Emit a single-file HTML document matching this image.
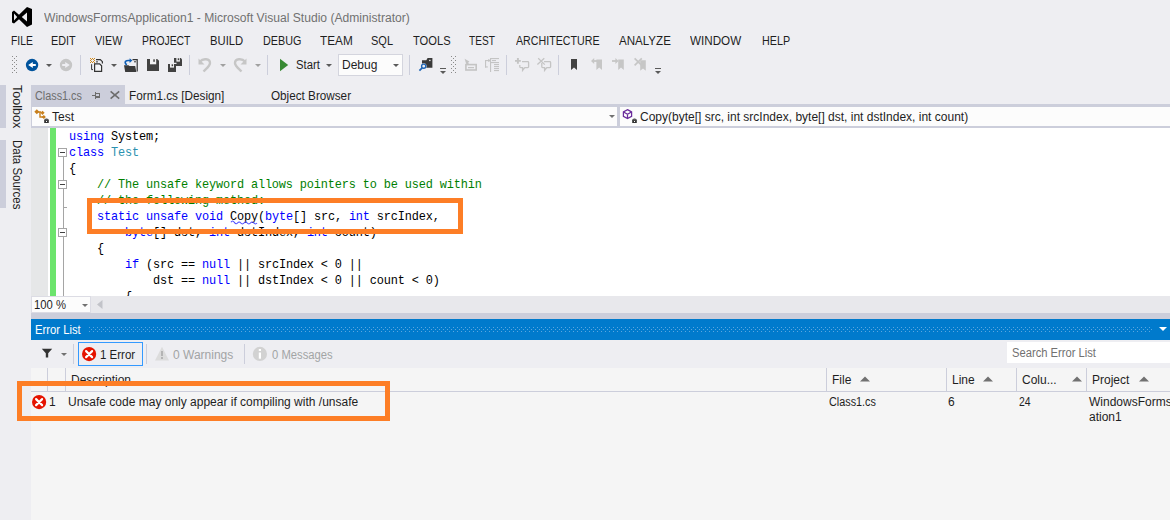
<!DOCTYPE html>
<html><head><meta charset="utf-8">
<style>
*{margin:0;padding:0;box-sizing:border-box}
html,body{width:1170px;height:520px;overflow:hidden;background:#eeeef2;font-family:"Liberation Sans",sans-serif;font-size:12px;color:#1e1e1e}
.a{position:absolute;white-space:nowrap;line-height:14px;transform-origin:0 0}
svg.a{overflow:visible}
.code{position:absolute;left:38px;font-family:"Liberation Mono",monospace;font-size:11.667px;line-height:16px;white-space:pre;color:#000}
.kw{color:#0000ff}.cm{color:#008000}.ty{color:#2b91af}
</style></head><body>
<svg class="a" style="left:0px;top:0px" width="40" height="30" viewBox="0 0 40 30"><path fill="#000" fill-rule="evenodd" d="M12 12 L14 10.5 L19 14.8 L27 7 L32 9 L32 24.5 L27 27 L19 19.3 L14 23.5 L12 22.5 Z M14 13.5 L17.2 17 L14 20.5 Z M21.8 17 L27 12.5 L27 21.5 Z"/></svg>
<div class="a" style="left:44px;top:11px;color:#717171;transform:scaleX(1.009);">WindowsFormsApplication1 - Microsoft Visual Studio (Administrator)</div>
<div class="a" style="left:10.9px;top:34px;color:#1e1e1e;transform:scaleX(0.8624999999999999);">FILE</div>
<div class="a" style="left:51.4px;top:34px;color:#1e1e1e;transform:scaleX(0.8999999999999999);">EDIT</div>
<div class="a" style="left:95.1px;top:34px;color:#1e1e1e;transform:scaleX(0.8870967741935484);">VIEW</div>
<div class="a" style="left:142.4px;top:34px;color:#1e1e1e;transform:scaleX(0.8654545454545455);">PROJECT</div>
<div class="a" style="left:210.4px;top:34px;color:#1e1e1e;transform:scaleX(0.9382352941176471);">BUILD</div>
<div class="a" style="left:262.6px;top:34px;color:#1e1e1e;transform:scaleX(0.8975609756097562);">DEBUG</div>
<div class="a" style="left:319.7px;top:34px;color:#1e1e1e;transform:scaleX(0.98125);">TEAM</div>
<div class="a" style="left:371.0px;top:34px;color:#1e1e1e;transform:scaleX(0.917391304347826);">SQL</div>
<div class="a" style="left:412.8px;top:34px;color:#1e1e1e;transform:scaleX(0.93);">TOOLS</div>
<div class="a" style="left:469.1px;top:34px;color:#1e1e1e;transform:scaleX(0.8419354838709677);">TEST</div>
<div class="a" style="left:515.8px;top:34px;color:#1e1e1e;transform:scaleX(0.8882978723404256);">ARCHITECTURE</div>
<div class="a" style="left:619.2px;top:34px;color:#1e1e1e;transform:scaleX(0.9641509433962264);">ANALYZE</div>
<div class="a" style="left:689.9px;top:34px;color:#1e1e1e;transform:scaleX(0.9716981132075472);">WINDOW</div>
<div class="a" style="left:761.7px;top:34px;color:#1e1e1e;transform:scaleX(0.8966666666666666);">HELP</div>
<svg class="a" style="left:0px;top:0px" width="1" height="1" viewBox="0 0 1 1"><g fill="#8a8a8a"><rect x="12" y="56" width="1" height="1"/><rect x="16" y="56" width="1" height="1"/><rect x="14" y="58" width="1" height="1"/><rect x="12" y="60" width="1" height="1"/><rect x="16" y="60" width="1" height="1"/><rect x="14" y="62" width="1" height="1"/><rect x="12" y="64" width="1" height="1"/><rect x="16" y="64" width="1" height="1"/><rect x="14" y="66" width="1" height="1"/><rect x="12" y="68" width="1" height="1"/><rect x="16" y="68" width="1" height="1"/><rect x="14" y="70" width="1" height="1"/><rect x="12" y="72" width="1" height="1"/><rect x="16" y="72" width="1" height="1"/></g></svg>
<svg class="a" style="left:0px;top:0px" width="1" height="1" viewBox="0 0 1 1"><g fill="#8a8a8a"><rect x="451" y="56" width="1" height="1"/><rect x="455" y="56" width="1" height="1"/><rect x="453" y="58" width="1" height="1"/><rect x="451" y="60" width="1" height="1"/><rect x="455" y="60" width="1" height="1"/><rect x="453" y="62" width="1" height="1"/><rect x="451" y="64" width="1" height="1"/><rect x="455" y="64" width="1" height="1"/><rect x="453" y="66" width="1" height="1"/><rect x="451" y="68" width="1" height="1"/><rect x="455" y="68" width="1" height="1"/><rect x="453" y="70" width="1" height="1"/><rect x="451" y="72" width="1" height="1"/><rect x="455" y="72" width="1" height="1"/></g></svg>
<svg class="a" style="left:25px;top:58px" width="14" height="14" viewBox="0 0 14 14"><circle cx="7.05" cy="7.05" r="6.2" fill="#00539c"/><path d="M3.2 7 L7.8 3.9 V6 H10.8 V8.1 H7.8 V10.1 Z" fill="#fff"/></svg>
<svg class="a" style="left:46px;top:64px" width="6" height="3" viewBox="0 0 6 3"><path d="M0 0H6L3.0 3Z" fill="#5a5a5a"/></svg>
<svg class="a" style="left:59px;top:58px" width="14" height="14" viewBox="0 0 14 14"><circle cx="7" cy="7.05" r="6.2" fill="#c6c6c6"/><path d="M10.8 7 L6.2 3.9 V6 H3.2 V8.1 H6.2 V10.1 Z" fill="#eeeef2"/></svg>
<div class="a" style="left:80px;top:55px;width:1px;height:20px;background:#cccedb;"></div>
<svg class="a" style="left:0px;top:0px" width="1" height="1" viewBox="0 0 1 1"><g fill="#d08a1e"><rect x="90" y="58" width="1" height="1"/><rect x="92" y="58" width="1" height="1"/><rect x="94" y="58" width="1" height="1"/><rect x="91" y="59" width="1" height="1"/><rect x="93" y="59" width="1" height="1"/><rect x="90" y="60" width="1" height="1"/><rect x="94" y="60" width="1" height="1"/><rect x="91" y="61" width="1" height="1"/><rect x="93" y="61" width="1" height="1"/><rect x="90" y="62" width="1" height="1"/><rect x="92" y="62" width="1" height="1"/><rect x="94" y="62" width="1" height="1"/></g>
<path d="M96 59.6 H100.3 L102.4 61.7 V63.5" fill="none" stroke="#333" stroke-width="1.2"/><path d="M96 61.9 H98" stroke="#333" stroke-width="1"/>
<path d="M94.6 63.8 H99.6 L101.6 65.8 V71.4 H94.6 Z" fill="#f4f4f6" stroke="#333" stroke-width="1.2"/>
<path d="M91.6 64.2 V69.6 H93" fill="none" stroke="#333" stroke-width="1"/></svg>
<svg class="a" style="left:111px;top:64px" width="6" height="3" viewBox="0 0 6 3"><path d="M0 0H6L3.0 3Z" fill="#5a5a5a"/></svg>
<svg class="a" style="left:0px;top:0px" width="1" height="1" viewBox="0 0 1 1"><path d="M132.5 59.6 H137.2 V71.4" fill="none" stroke="#333" stroke-width="1.2"/><path d="M134 61.8 H136" stroke="#333" stroke-width="1"/>
<path d="M124 65.2 H128.5 L129.5 66 H135.2 L136.3 71.9 H125.2 Z" fill="#3a3a3a"/>
<path d="M127 64.6 C124.8 64 124.6 61.5 126.5 60.8 C127.5 60.4 129 60.5 130 60.6" fill="none" stroke="#0e5eb5" stroke-width="1.7"/><path d="M129.6 58.2 L132.4 60.6 L129.6 63 Z" fill="#0e5eb5"/></svg>
<svg class="a" style="left:0px;top:0px" width="1" height="1" viewBox="0 0 1 1"><path d="M147 59 H157.2 L159 60.8 V71 H147 Z" fill="#424242"/><rect x="150" y="59" width="6.199999999999989" height="5.299999999999997" fill="#f2f2f4"/><rect x="153.3" y="59.3" width="1.5" height="2.4999999999999973" fill="#424242"/></svg>
<svg class="a" style="left:0px;top:0px" width="1" height="1" viewBox="0 0 1 1"><path d="M174 58 H180.8 L182 59.2 V66 H174 Z" fill="#424242"/><rect x="176.4" y="58" width="3.5" height="3.6000000000000014" fill="#f2f2f4"/><rect x="177.7" y="58.3" width="1.5" height="1.9000000000000028" fill="#424242"/><path d="M173.5 63.2 V72.5 M173 63.3 H176.5" stroke="#eeeef2" stroke-width="1.2"/><path d="M168 64 H174.8 L176 65.2 V72 H168 Z" fill="#424242"/><rect x="170" y="64" width="4" height="3.5999999999999943" fill="#f2f2f4"/><rect x="171.6" y="64.3" width="1.5" height="1.9000000000000028" fill="#424242"/></svg>
<div class="a" style="left:189px;top:55px;width:1px;height:20px;background:#cccedb;"></div>
<svg class="a" style="left:197px;top:57px" width="16" height="16" viewBox="0 0 16 16"><path d="M3 4.5 C6 1 13 1.5 13 6 C13 9 10 11 6.5 14.5" fill="none" stroke="#c6c6c6" stroke-width="2.4"/><path d="M1.5 1.5 V7.5 H7.5 Z" fill="#c6c6c6"/></svg>
<svg class="a" style="left:220px;top:64px" width="6" height="3" viewBox="0 0 6 3"><path d="M0 0H6L3.0 3Z" fill="#a0a0a0"/></svg>
<svg class="a" style="left:232px;top:57px" width="16" height="16" viewBox="0 0 16 16"><path d="M13 4.5 C10 1 3 1.5 3 6 C3 9 6 11 9.5 14.5" fill="none" stroke="#c6c6c6" stroke-width="2.4"/><path d="M14.5 1.5 V7.5 H8.5 Z" fill="#c6c6c6"/></svg>
<svg class="a" style="left:255px;top:64px" width="6" height="3" viewBox="0 0 6 3"><path d="M0 0H6L3.0 3Z" fill="#a0a0a0"/></svg>
<div class="a" style="left:267px;top:55px;width:1px;height:20px;background:#cccedb;"></div>
<svg class="a" style="left:279px;top:58px" width="10" height="14" viewBox="0 0 10 14"><path d="M1 0.8 L9.2 7 L1 13.2 Z" fill="#388a34"/></svg>
<div class="a" style="left:296px;top:58px;color:#1e1e1e;transform:scaleX(0.94);">Start</div>
<svg class="a" style="left:326px;top:64px" width="6" height="3" viewBox="0 0 6 3"><path d="M0 0H6L3.0 3Z" fill="#5a5a5a"/></svg>
<div class="a" style="left:338px;top:54px;width:65px;height:22px;background:#fcfcfc;border:1px solid #d4d5de"></div>
<div class="a" style="left:342px;top:58px;color:#1e1e1e;">Debug</div>
<svg class="a" style="left:393px;top:64px" width="6" height="3" viewBox="0 0 6 3"><path d="M0 0H6L3.0 3Z" fill="#5a5a5a"/></svg>
<div class="a" style="left:409px;top:55px;width:1px;height:20px;background:#cccedb;"></div>
<svg class="a" style="left:0px;top:0px" width="1" height="1" viewBox="0 0 1 1"><path d="M422 60.3 H426.3 L427.6 58 H432.4 V67.8 H422 Z" fill="#3a3a3a"/><rect x="429.2" y="59.8" width="1.3" height="1.3" fill="#fff"/>
<circle cx="423.7" cy="66.2" r="2.9" fill="#eeeef2"/><circle cx="423.7" cy="66.2" r="2.1" fill="#eeeef2" stroke="#1e64b4" stroke-width="1.4"/><path d="M422.2 67.8 L419.4 70.6" stroke="#1e64b4" stroke-width="1.7"/></svg>
<div class="a" style="left:440px;top:68px;width:6px;height:1px;background:#5a5a5a;"></div>
<svg class="a" style="left:440px;top:71px" width="6" height="3" viewBox="0 0 6 3"><path d="M0 0H6L3.0 3Z" fill="#5a5a5a"/></svg>
<svg class="a" style="left:0px;top:0px" width="1" height="1" viewBox="0 0 1 1"><path d="M464.6 58.8 L469.4 61.6 L466.4 64.4 Z" fill="#c4c4c4"/><path d="M467 62 L468.4 64.6" stroke="#c4c4c4" stroke-width="1.4"/><rect x="465.9" y="64.6" width="10.3" height="5.4" fill="none" stroke="#c4c4c4" stroke-width="1.6"/><rect x="468" y="67" width="6" height="1.2" fill="#c4c4c4"/></svg>
<svg class="a" style="left:0px;top:0px" width="1" height="1" viewBox="0 0 1 1"><g fill="#c4c4c4"><rect x="490" y="58" width="9" height="1.1"/><rect x="490" y="58" width="1.1" height="14"/><rect x="492" y="60" width="4" height="1.1"/><rect x="490" y="62" width="9" height="1.1"/><rect x="494" y="64" width="5" height="1.1"/><rect x="494" y="66" width="5" height="1.1"/><rect x="494" y="68" width="5" height="1.1"/><rect x="494" y="70" width="5" height="1.1"/><rect x="485" y="60" width="5" height="1.1"/><rect x="485" y="60" width="1.1" height="7.5"/><rect x="485" y="66.4" width="2.8" height="1.1"/><rect x="488.3" y="59" width="1.1" height="3"/></g></svg>
<div class="a" style="left:506px;top:55px;width:1px;height:20px;background:#cccedb;"></div>
<svg class="a" style="left:0px;top:0px" width="1" height="1" viewBox="0 0 1 1"><path d="M517.9 58 V63.8 M515 60.9 H520.8" stroke="#c4c4c4" stroke-width="1.9"/><path d="M522 61.6 H527.8 Q528.6 61.6 528.6 62.4 V66.8 Q528.6 67.6 527.8 67.6 H524.8 L522.6 70.4 V67.6 H520.6 Q519.8 67.6 519.8 66.8 V65" fill="none" stroke="#c4c4c4" stroke-width="1.3"/></svg>
<svg class="a" style="left:0px;top:0px" width="1" height="1" viewBox="0 0 1 1"><path d="M537.4 64.4 L544.3 58.2 M538.2 58.3 L544.8 64.6" stroke="#c4c4c4" stroke-width="1.3"/><path d="M544 61.6 H549.8 Q550.6 61.6 550.6 62.4 V66.8 Q550.6 67.6 549.8 67.6 H546.8 L544.6 70.4 V67.6 H542.6 Q541.8 67.6 541.8 66.8 V63" fill="none" stroke="#c4c4c4" stroke-width="1.3"/></svg>
<div class="a" style="left:558px;top:55px;width:1px;height:20px;background:#cccedb;"></div>
<svg class="a" style="left:0px;top:0px" width="1" height="1" viewBox="0 0 1 1"><path d="M571 59 H577 V70 L574 67.6 L571 70 Z" fill="#424242"/></svg>
<svg class="a" style="left:0px;top:0px" width="1" height="1" viewBox="0 0 1 1"><path d="M591 61 L594.2 58 V64 Z" fill="#c6c6c6"/><rect x="593.5" y="60.1" width="4.5" height="1.8" fill="#c6c6c6"/><path d="M596.4 59.4h5.6v10.6l-2.8-2.4l-2.8 2.4z" fill="#c6c6c6"/></svg>
<svg class="a" style="left:0px;top:0px" width="1" height="1" viewBox="0 0 1 1"><path d="M618.6 61 L615.4 58 V64 Z" fill="#c6c6c6"/><rect x="612" y="60.1" width="4.5" height="1.8" fill="#c6c6c6"/><path d="M618.2 59.4h5.6v10.6l-2.8-2.4l-2.8 2.4z" fill="#c6c6c6"/></svg>
<svg class="a" style="left:0px;top:0px" width="1" height="1" viewBox="0 0 1 1"><path d="M634.6 58.4 L641.8 65.4 M641.8 58.4 L634.6 65.4" stroke="#c6c6c6" stroke-width="1.7"/><path d="M640.2 60.2h5.6v10.6l-2.8-2.4l-2.8 2.4z" fill="#c6c6c6"/></svg>
<div class="a" style="left:655px;top:68px;width:6px;height:1px;background:#5a5a5a;"></div>
<svg class="a" style="left:655px;top:71px" width="6" height="3" viewBox="0 0 6 3"><path d="M0 0H6L3.0 3Z" fill="#5a5a5a"/></svg>
<div class="a" style="left:0px;top:85px;width:6px;height:43px;background:#cccedb;"></div>
<div class="a" style="left:0px;top:140px;width:6px;height:68px;background:#cccedb;"></div>
<div class="a" style="left:24px;top:85px;transform:rotate(90deg) scaleX(1.045);color:#1e1e1e">Toolbox</div>
<div class="a" style="left:24px;top:139.5px;transform:rotate(90deg) scaleX(0.955);color:#1e1e1e">Data Sources</div>
<div class="a" style="left:31px;top:85px;width:94px;height:22px;background:#cccedb;"></div>
<div class="a" style="left:31px;top:104px;width:1139px;height:3px;background:#cccedb;"></div>
<div class="a" style="left:35px;top:89px;color:#6d6d6d;transform:scaleX(0.9019607843137255);">Class1.cs</div>
<svg class="a" style="left:0px;top:0px" width="1" height="1" viewBox="0 0 1 1"><g fill="#6d6d6d"><rect x="92" y="95" width="3" height="1"/><rect x="95" y="92" width="1" height="7"/><rect x="96" y="93" width="4" height="1"/><rect x="96" y="96" width="4" height="2"/><rect x="99" y="93" width="1" height="4"/></g></svg>
<svg class="a" style="left:0px;top:0px" width="1" height="1" viewBox="0 0 1 1"><path d="M110.6 91.3 L119.2 98.7 M119.2 91.3 L110.6 98.7" stroke="#6d6d6d" stroke-width="1.6"/></svg>
<div class="a" style="left:128.5px;top:89px;color:#1e1e1e;transform:scaleX(0.9791666666666666);">Form1.cs [Design]</div>
<div class="a" style="left:271px;top:89px;color:#1e1e1e;transform:scaleX(0.975609756097561);">Object Browser</div>
<div class="a" style="left:31px;top:107px;width:1139px;height:19px;background:#fcfcfc;"></div>
<div class="a" style="left:31px;top:126px;width:1139px;height:2px;background:#cccedb;"></div>
<div class="a" style="left:617px;top:107px;width:3px;height:19px;background:#cccedb;"></div>
<div class="a" style="left:31px;top:107px;width:1px;height:19px;background:#cccedb;"></div>
<svg class="a" style="left:0px;top:0px" width="1" height="1" viewBox="0 0 1 1"><g fill="#c8801e"><path d="M34.3 111.7 L36.8 109.2 L39.3 111.7 L36.8 114.2Z"/><path d="M40.4 112.8 L42.5 110.7 L44.6 112.8 L42.5 114.9Z"/><path d="M41.7 117 L43.8 114.9 L45.9 117 L43.8 119.1Z"/></g>
<path d="M37 112 H41 M40 112.5 V117 H43" fill="none" stroke="#c8801e" stroke-width="1.4"/><path d="M44.2 123 V120.2 Q44.2 118.4 46.5 118.4 Q48.8 118.4 48.8 120.2 V123 Z" fill="#333"/><rect x="45.2" y="119.4" width="2.6" height="0.9" fill="#777"/><rect x="46" y="121" width="1" height="1" fill="#fff"/></svg>
<div class="a" style="left:52px;top:110px;color:#1e1e1e;">Test</div>
<svg class="a" style="left:609px;top:115px" width="6" height="3" viewBox="0 0 6 3"><path d="M0 0H6L3.0 3Z" fill="#717171"/></svg>
<svg class="a" style="left:0px;top:0px" width="1" height="1" viewBox="0 0 1 1"><path d="M627.5 109.6 L631.6 111.9 V116.3 L627.5 118.5 L623.4 116.3 V111.9 Z M623.6 112 L627.5 114.2 L631.4 112 M627.5 114.2 V118.4" fill="none" stroke="#6a2c9c" stroke-width="1.25"/><path d="M632.2 123 V120.2 Q632.2 118.4 634.5 118.4 Q636.8 118.4 636.8 120.2 V123 Z" fill="#333"/><rect x="633.2" y="119.4" width="2.6" height="0.9" fill="#777"/><rect x="634" y="121" width="1" height="1" fill="#fff"/></svg>
<div class="a" style="left:640px;top:110px;color:#1e1e1e;">Copy(byte[] src, int srcIndex, byte[] dst, int dstIndex, int count)</div>
<div class="a" style="left:31px;top:128px;width:1139px;height:168px;background:#ffffff;"></div>
<div class="a" style="left:31px;top:128px;width:17px;height:168px;background:#e6e7e8;"></div>
<div class="a" style="left:50px;top:128px;width:6px;height:168px;background:#6ce46c;"></div>
<div class="a" style="left:63px;top:157px;width:1px;height:139px;background:#a5a5a5;"></div>
<div class="a" style="left:58px;top:148px;width:9px;height:9px;border:1px solid #a5a5a5;background:#fff"></div>
<div class="a" style="left:60px;top:152px;width:5px;height:1px;background:#424242;"></div>
<div class="a" style="left:58px;top:180px;width:9px;height:9px;border:1px solid #a5a5a5;background:#fff"></div>
<div class="a" style="left:60px;top:184px;width:5px;height:1px;background:#424242;"></div>
<div class="a" style="left:58px;top:228px;width:9px;height:9px;border:1px solid #a5a5a5;background:#fff"></div>
<div class="a" style="left:60px;top:232px;width:5px;height:1px;background:#424242;"></div>
<div class="a" style="left:63px;top:207px;width:4px;height:1px;background:#a5a5a5;"></div>
<div class="a" style="left:69px;top:128px;width:1100px;height:168px;overflow:hidden">
<div style="position:absolute;left:0px;top:1px;font-family:'Liberation Mono',monospace;font-size:11.9px;letter-spacing:-0.14px;line-height:16px;white-space:pre;color:#000"><span class="kw">using</span> System;
<span class="kw">class</span> <span class="ty">Test</span>
{
    <span class="cm">// The unsafe keyword allows pointers to be used within</span>
    <span class="cm">// the following method:</span>
    <span class="kw">static</span> <span class="kw">unsafe</span> <span class="kw">void</span> Copy(<span class="kw">byte</span>[] src, <span class="kw">int</span> srcIndex,
        <span class="kw">byte</span>[] dst, <span class="kw">int</span> dstIndex, <span class="kw">int</span> count)
    {
        <span class="kw">if</span> (src == <span class="kw">null</span> || srcIndex &lt; 0 ||
            dst == <span class="kw">null</span> || dstIndex &lt; 0 || count &lt; 0)
        {</div>
</div>
<svg class="a" style="left:0px;top:0px" width="1" height="1" viewBox="0 0 1 1"><path d="M231 222.3 Q232.6 219.7 234.25 222.3 T237.50 223 T240.75 223 T244.00 223 T247.25 223 T250.50 223 T253.75 223 T257.00 223" fill="none" stroke="#4b4bff" stroke-width="1.1"/></svg>
<div class="a" style="left:31px;top:296px;width:1139px;height:17px;background:#e8e8ec;"></div>
<div class="a" style="left:31px;top:296px;width:60px;height:17px;background:#fcfcfc;border:1px solid #dcdce4"></div>
<div class="a" style="left:34px;top:298px;color:#1e1e1e;transform:scaleX(0.9393939393939394);">100 %</div>
<svg class="a" style="left:82px;top:304px" width="6" height="3" viewBox="0 0 6 3"><path d="M0 0H6L3.0 3Z" fill="#717171"/></svg>
<svg class="a" style="left:96px;top:299px" width="8" height="11" viewBox="0 0 8 11"><path d="M6.5 1 V10 L1 5.5 Z" fill="#c2c3c9"/></svg>
<div class="a" style="left:31px;top:313px;width:1139px;height:6px;background:#cccedb;"></div>
<div class="a" style="left:31px;top:319px;width:1139px;height:21px;background:#007acc;"></div>
<div class="a" style="left:35px;top:323px;color:#ffffff;transform:scaleX(0.9375);">Error List</div>
<svg class="a" style="left:0px;top:0px" width="1" height="1" viewBox="0 0 1 1"><g fill="#5ba6e0"><rect x="89" y="327" width="1" height="1"/><rect x="89" y="331" width="1" height="1"/><rect x="91" y="329" width="1" height="1"/><rect x="93" y="327" width="1" height="1"/><rect x="93" y="331" width="1" height="1"/><rect x="95" y="329" width="1" height="1"/><rect x="97" y="327" width="1" height="1"/><rect x="97" y="331" width="1" height="1"/><rect x="99" y="329" width="1" height="1"/><rect x="101" y="327" width="1" height="1"/><rect x="101" y="331" width="1" height="1"/><rect x="103" y="329" width="1" height="1"/><rect x="105" y="327" width="1" height="1"/><rect x="105" y="331" width="1" height="1"/><rect x="107" y="329" width="1" height="1"/><rect x="109" y="327" width="1" height="1"/><rect x="109" y="331" width="1" height="1"/><rect x="111" y="329" width="1" height="1"/><rect x="113" y="327" width="1" height="1"/><rect x="113" y="331" width="1" height="1"/><rect x="115" y="329" width="1" height="1"/><rect x="117" y="327" width="1" height="1"/><rect x="117" y="331" width="1" height="1"/><rect x="119" y="329" width="1" height="1"/><rect x="121" y="327" width="1" height="1"/><rect x="121" y="331" width="1" height="1"/><rect x="123" y="329" width="1" height="1"/><rect x="125" y="327" width="1" height="1"/><rect x="125" y="331" width="1" height="1"/><rect x="127" y="329" width="1" height="1"/><rect x="129" y="327" width="1" height="1"/><rect x="129" y="331" width="1" height="1"/><rect x="131" y="329" width="1" height="1"/><rect x="133" y="327" width="1" height="1"/><rect x="133" y="331" width="1" height="1"/><rect x="135" y="329" width="1" height="1"/><rect x="137" y="327" width="1" height="1"/><rect x="137" y="331" width="1" height="1"/><rect x="139" y="329" width="1" height="1"/><rect x="141" y="327" width="1" height="1"/><rect x="141" y="331" width="1" height="1"/><rect x="143" y="329" width="1" height="1"/><rect x="145" y="327" width="1" height="1"/><rect x="145" y="331" width="1" height="1"/><rect x="147" y="329" width="1" height="1"/><rect x="149" y="327" width="1" height="1"/><rect x="149" y="331" width="1" height="1"/><rect x="151" y="329" width="1" height="1"/><rect x="153" y="327" width="1" height="1"/><rect x="153" y="331" width="1" height="1"/><rect x="155" y="329" width="1" height="1"/><rect x="157" y="327" width="1" height="1"/><rect x="157" y="331" width="1" height="1"/><rect x="159" y="329" width="1" height="1"/><rect x="161" y="327" width="1" height="1"/><rect x="161" y="331" width="1" height="1"/><rect x="163" y="329" width="1" height="1"/><rect x="165" y="327" width="1" height="1"/><rect x="165" y="331" width="1" height="1"/><rect x="167" y="329" width="1" height="1"/><rect x="169" y="327" width="1" height="1"/><rect x="169" y="331" width="1" height="1"/><rect x="171" y="329" width="1" height="1"/><rect x="173" y="327" width="1" height="1"/><rect x="173" y="331" width="1" height="1"/><rect x="175" y="329" width="1" height="1"/><rect x="177" y="327" width="1" height="1"/><rect x="177" y="331" width="1" height="1"/><rect x="179" y="329" width="1" height="1"/><rect x="181" y="327" width="1" height="1"/><rect x="181" y="331" width="1" height="1"/><rect x="183" y="329" width="1" height="1"/><rect x="185" y="327" width="1" height="1"/><rect x="185" y="331" width="1" height="1"/><rect x="187" y="329" width="1" height="1"/><rect x="189" y="327" width="1" height="1"/><rect x="189" y="331" width="1" height="1"/><rect x="191" y="329" width="1" height="1"/><rect x="193" y="327" width="1" height="1"/><rect x="193" y="331" width="1" height="1"/><rect x="195" y="329" width="1" height="1"/><rect x="197" y="327" width="1" height="1"/><rect x="197" y="331" width="1" height="1"/><rect x="199" y="329" width="1" height="1"/><rect x="201" y="327" width="1" height="1"/><rect x="201" y="331" width="1" height="1"/><rect x="203" y="329" width="1" height="1"/><rect x="205" y="327" width="1" height="1"/><rect x="205" y="331" width="1" height="1"/><rect x="207" y="329" width="1" height="1"/><rect x="209" y="327" width="1" height="1"/><rect x="209" y="331" width="1" height="1"/><rect x="211" y="329" width="1" height="1"/><rect x="213" y="327" width="1" height="1"/><rect x="213" y="331" width="1" height="1"/><rect x="215" y="329" width="1" height="1"/><rect x="217" y="327" width="1" height="1"/><rect x="217" y="331" width="1" height="1"/><rect x="219" y="329" width="1" height="1"/><rect x="221" y="327" width="1" height="1"/><rect x="221" y="331" width="1" height="1"/><rect x="223" y="329" width="1" height="1"/><rect x="225" y="327" width="1" height="1"/><rect x="225" y="331" width="1" height="1"/><rect x="227" y="329" width="1" height="1"/><rect x="229" y="327" width="1" height="1"/><rect x="229" y="331" width="1" height="1"/><rect x="231" y="329" width="1" height="1"/><rect x="233" y="327" width="1" height="1"/><rect x="233" y="331" width="1" height="1"/><rect x="235" y="329" width="1" height="1"/><rect x="237" y="327" width="1" height="1"/><rect x="237" y="331" width="1" height="1"/><rect x="239" y="329" width="1" height="1"/><rect x="241" y="327" width="1" height="1"/><rect x="241" y="331" width="1" height="1"/><rect x="243" y="329" width="1" height="1"/><rect x="245" y="327" width="1" height="1"/><rect x="245" y="331" width="1" height="1"/><rect x="247" y="329" width="1" height="1"/><rect x="249" y="327" width="1" height="1"/><rect x="249" y="331" width="1" height="1"/><rect x="251" y="329" width="1" height="1"/><rect x="253" y="327" width="1" height="1"/><rect x="253" y="331" width="1" height="1"/><rect x="255" y="329" width="1" height="1"/><rect x="257" y="327" width="1" height="1"/><rect x="257" y="331" width="1" height="1"/><rect x="259" y="329" width="1" height="1"/><rect x="261" y="327" width="1" height="1"/><rect x="261" y="331" width="1" height="1"/><rect x="263" y="329" width="1" height="1"/><rect x="265" y="327" width="1" height="1"/><rect x="265" y="331" width="1" height="1"/><rect x="267" y="329" width="1" height="1"/><rect x="269" y="327" width="1" height="1"/><rect x="269" y="331" width="1" height="1"/><rect x="271" y="329" width="1" height="1"/><rect x="273" y="327" width="1" height="1"/><rect x="273" y="331" width="1" height="1"/><rect x="275" y="329" width="1" height="1"/><rect x="277" y="327" width="1" height="1"/><rect x="277" y="331" width="1" height="1"/><rect x="279" y="329" width="1" height="1"/><rect x="281" y="327" width="1" height="1"/><rect x="281" y="331" width="1" height="1"/><rect x="283" y="329" width="1" height="1"/><rect x="285" y="327" width="1" height="1"/><rect x="285" y="331" width="1" height="1"/><rect x="287" y="329" width="1" height="1"/><rect x="289" y="327" width="1" height="1"/><rect x="289" y="331" width="1" height="1"/><rect x="291" y="329" width="1" height="1"/><rect x="293" y="327" width="1" height="1"/><rect x="293" y="331" width="1" height="1"/><rect x="295" y="329" width="1" height="1"/><rect x="297" y="327" width="1" height="1"/><rect x="297" y="331" width="1" height="1"/><rect x="299" y="329" width="1" height="1"/><rect x="301" y="327" width="1" height="1"/><rect x="301" y="331" width="1" height="1"/><rect x="303" y="329" width="1" height="1"/><rect x="305" y="327" width="1" height="1"/><rect x="305" y="331" width="1" height="1"/><rect x="307" y="329" width="1" height="1"/><rect x="309" y="327" width="1" height="1"/><rect x="309" y="331" width="1" height="1"/><rect x="311" y="329" width="1" height="1"/><rect x="313" y="327" width="1" height="1"/><rect x="313" y="331" width="1" height="1"/><rect x="315" y="329" width="1" height="1"/><rect x="317" y="327" width="1" height="1"/><rect x="317" y="331" width="1" height="1"/><rect x="319" y="329" width="1" height="1"/><rect x="321" y="327" width="1" height="1"/><rect x="321" y="331" width="1" height="1"/><rect x="323" y="329" width="1" height="1"/><rect x="325" y="327" width="1" height="1"/><rect x="325" y="331" width="1" height="1"/><rect x="327" y="329" width="1" height="1"/><rect x="329" y="327" width="1" height="1"/><rect x="329" y="331" width="1" height="1"/><rect x="331" y="329" width="1" height="1"/><rect x="333" y="327" width="1" height="1"/><rect x="333" y="331" width="1" height="1"/><rect x="335" y="329" width="1" height="1"/><rect x="337" y="327" width="1" height="1"/><rect x="337" y="331" width="1" height="1"/><rect x="339" y="329" width="1" height="1"/><rect x="341" y="327" width="1" height="1"/><rect x="341" y="331" width="1" height="1"/><rect x="343" y="329" width="1" height="1"/><rect x="345" y="327" width="1" height="1"/><rect x="345" y="331" width="1" height="1"/><rect x="347" y="329" width="1" height="1"/><rect x="349" y="327" width="1" height="1"/><rect x="349" y="331" width="1" height="1"/><rect x="351" y="329" width="1" height="1"/><rect x="353" y="327" width="1" height="1"/><rect x="353" y="331" width="1" height="1"/><rect x="355" y="329" width="1" height="1"/><rect x="357" y="327" width="1" height="1"/><rect x="357" y="331" width="1" height="1"/><rect x="359" y="329" width="1" height="1"/><rect x="361" y="327" width="1" height="1"/><rect x="361" y="331" width="1" height="1"/><rect x="363" y="329" width="1" height="1"/><rect x="365" y="327" width="1" height="1"/><rect x="365" y="331" width="1" height="1"/><rect x="367" y="329" width="1" height="1"/><rect x="369" y="327" width="1" height="1"/><rect x="369" y="331" width="1" height="1"/><rect x="371" y="329" width="1" height="1"/><rect x="373" y="327" width="1" height="1"/><rect x="373" y="331" width="1" height="1"/><rect x="375" y="329" width="1" height="1"/><rect x="377" y="327" width="1" height="1"/><rect x="377" y="331" width="1" height="1"/><rect x="379" y="329" width="1" height="1"/><rect x="381" y="327" width="1" height="1"/><rect x="381" y="331" width="1" height="1"/><rect x="383" y="329" width="1" height="1"/><rect x="385" y="327" width="1" height="1"/><rect x="385" y="331" width="1" height="1"/><rect x="387" y="329" width="1" height="1"/><rect x="389" y="327" width="1" height="1"/><rect x="389" y="331" width="1" height="1"/><rect x="391" y="329" width="1" height="1"/><rect x="393" y="327" width="1" height="1"/><rect x="393" y="331" width="1" height="1"/><rect x="395" y="329" width="1" height="1"/><rect x="397" y="327" width="1" height="1"/><rect x="397" y="331" width="1" height="1"/><rect x="399" y="329" width="1" height="1"/><rect x="401" y="327" width="1" height="1"/><rect x="401" y="331" width="1" height="1"/><rect x="403" y="329" width="1" height="1"/><rect x="405" y="327" width="1" height="1"/><rect x="405" y="331" width="1" height="1"/><rect x="407" y="329" width="1" height="1"/><rect x="409" y="327" width="1" height="1"/><rect x="409" y="331" width="1" height="1"/><rect x="411" y="329" width="1" height="1"/><rect x="413" y="327" width="1" height="1"/><rect x="413" y="331" width="1" height="1"/><rect x="415" y="329" width="1" height="1"/><rect x="417" y="327" width="1" height="1"/><rect x="417" y="331" width="1" height="1"/><rect x="419" y="329" width="1" height="1"/><rect x="421" y="327" width="1" height="1"/><rect x="421" y="331" width="1" height="1"/><rect x="423" y="329" width="1" height="1"/><rect x="425" y="327" width="1" height="1"/><rect x="425" y="331" width="1" height="1"/><rect x="427" y="329" width="1" height="1"/><rect x="429" y="327" width="1" height="1"/><rect x="429" y="331" width="1" height="1"/><rect x="431" y="329" width="1" height="1"/><rect x="433" y="327" width="1" height="1"/><rect x="433" y="331" width="1" height="1"/><rect x="435" y="329" width="1" height="1"/><rect x="437" y="327" width="1" height="1"/><rect x="437" y="331" width="1" height="1"/><rect x="439" y="329" width="1" height="1"/><rect x="441" y="327" width="1" height="1"/><rect x="441" y="331" width="1" height="1"/><rect x="443" y="329" width="1" height="1"/><rect x="445" y="327" width="1" height="1"/><rect x="445" y="331" width="1" height="1"/><rect x="447" y="329" width="1" height="1"/><rect x="449" y="327" width="1" height="1"/><rect x="449" y="331" width="1" height="1"/><rect x="451" y="329" width="1" height="1"/><rect x="453" y="327" width="1" height="1"/><rect x="453" y="331" width="1" height="1"/><rect x="455" y="329" width="1" height="1"/><rect x="457" y="327" width="1" height="1"/><rect x="457" y="331" width="1" height="1"/><rect x="459" y="329" width="1" height="1"/><rect x="461" y="327" width="1" height="1"/><rect x="461" y="331" width="1" height="1"/><rect x="463" y="329" width="1" height="1"/><rect x="465" y="327" width="1" height="1"/><rect x="465" y="331" width="1" height="1"/><rect x="467" y="329" width="1" height="1"/><rect x="469" y="327" width="1" height="1"/><rect x="469" y="331" width="1" height="1"/><rect x="471" y="329" width="1" height="1"/><rect x="473" y="327" width="1" height="1"/><rect x="473" y="331" width="1" height="1"/><rect x="475" y="329" width="1" height="1"/><rect x="477" y="327" width="1" height="1"/><rect x="477" y="331" width="1" height="1"/><rect x="479" y="329" width="1" height="1"/><rect x="481" y="327" width="1" height="1"/><rect x="481" y="331" width="1" height="1"/><rect x="483" y="329" width="1" height="1"/><rect x="485" y="327" width="1" height="1"/><rect x="485" y="331" width="1" height="1"/><rect x="487" y="329" width="1" height="1"/><rect x="489" y="327" width="1" height="1"/><rect x="489" y="331" width="1" height="1"/><rect x="491" y="329" width="1" height="1"/><rect x="493" y="327" width="1" height="1"/><rect x="493" y="331" width="1" height="1"/><rect x="495" y="329" width="1" height="1"/><rect x="497" y="327" width="1" height="1"/><rect x="497" y="331" width="1" height="1"/><rect x="499" y="329" width="1" height="1"/><rect x="501" y="327" width="1" height="1"/><rect x="501" y="331" width="1" height="1"/><rect x="503" y="329" width="1" height="1"/><rect x="505" y="327" width="1" height="1"/><rect x="505" y="331" width="1" height="1"/><rect x="507" y="329" width="1" height="1"/><rect x="509" y="327" width="1" height="1"/><rect x="509" y="331" width="1" height="1"/><rect x="511" y="329" width="1" height="1"/><rect x="513" y="327" width="1" height="1"/><rect x="513" y="331" width="1" height="1"/><rect x="515" y="329" width="1" height="1"/><rect x="517" y="327" width="1" height="1"/><rect x="517" y="331" width="1" height="1"/><rect x="519" y="329" width="1" height="1"/><rect x="521" y="327" width="1" height="1"/><rect x="521" y="331" width="1" height="1"/><rect x="523" y="329" width="1" height="1"/><rect x="525" y="327" width="1" height="1"/><rect x="525" y="331" width="1" height="1"/><rect x="527" y="329" width="1" height="1"/><rect x="529" y="327" width="1" height="1"/><rect x="529" y="331" width="1" height="1"/><rect x="531" y="329" width="1" height="1"/><rect x="533" y="327" width="1" height="1"/><rect x="533" y="331" width="1" height="1"/><rect x="535" y="329" width="1" height="1"/><rect x="537" y="327" width="1" height="1"/><rect x="537" y="331" width="1" height="1"/><rect x="539" y="329" width="1" height="1"/><rect x="541" y="327" width="1" height="1"/><rect x="541" y="331" width="1" height="1"/><rect x="543" y="329" width="1" height="1"/><rect x="545" y="327" width="1" height="1"/><rect x="545" y="331" width="1" height="1"/><rect x="547" y="329" width="1" height="1"/><rect x="549" y="327" width="1" height="1"/><rect x="549" y="331" width="1" height="1"/><rect x="551" y="329" width="1" height="1"/><rect x="553" y="327" width="1" height="1"/><rect x="553" y="331" width="1" height="1"/><rect x="555" y="329" width="1" height="1"/><rect x="557" y="327" width="1" height="1"/><rect x="557" y="331" width="1" height="1"/><rect x="559" y="329" width="1" height="1"/><rect x="561" y="327" width="1" height="1"/><rect x="561" y="331" width="1" height="1"/><rect x="563" y="329" width="1" height="1"/><rect x="565" y="327" width="1" height="1"/><rect x="565" y="331" width="1" height="1"/><rect x="567" y="329" width="1" height="1"/><rect x="569" y="327" width="1" height="1"/><rect x="569" y="331" width="1" height="1"/><rect x="571" y="329" width="1" height="1"/><rect x="573" y="327" width="1" height="1"/><rect x="573" y="331" width="1" height="1"/><rect x="575" y="329" width="1" height="1"/><rect x="577" y="327" width="1" height="1"/><rect x="577" y="331" width="1" height="1"/><rect x="579" y="329" width="1" height="1"/><rect x="581" y="327" width="1" height="1"/><rect x="581" y="331" width="1" height="1"/><rect x="583" y="329" width="1" height="1"/><rect x="585" y="327" width="1" height="1"/><rect x="585" y="331" width="1" height="1"/><rect x="587" y="329" width="1" height="1"/><rect x="589" y="327" width="1" height="1"/><rect x="589" y="331" width="1" height="1"/><rect x="591" y="329" width="1" height="1"/><rect x="593" y="327" width="1" height="1"/><rect x="593" y="331" width="1" height="1"/><rect x="595" y="329" width="1" height="1"/><rect x="597" y="327" width="1" height="1"/><rect x="597" y="331" width="1" height="1"/><rect x="599" y="329" width="1" height="1"/><rect x="601" y="327" width="1" height="1"/><rect x="601" y="331" width="1" height="1"/><rect x="603" y="329" width="1" height="1"/><rect x="605" y="327" width="1" height="1"/><rect x="605" y="331" width="1" height="1"/><rect x="607" y="329" width="1" height="1"/><rect x="609" y="327" width="1" height="1"/><rect x="609" y="331" width="1" height="1"/><rect x="611" y="329" width="1" height="1"/><rect x="613" y="327" width="1" height="1"/><rect x="613" y="331" width="1" height="1"/><rect x="615" y="329" width="1" height="1"/><rect x="617" y="327" width="1" height="1"/><rect x="617" y="331" width="1" height="1"/><rect x="619" y="329" width="1" height="1"/><rect x="621" y="327" width="1" height="1"/><rect x="621" y="331" width="1" height="1"/><rect x="623" y="329" width="1" height="1"/><rect x="625" y="327" width="1" height="1"/><rect x="625" y="331" width="1" height="1"/><rect x="627" y="329" width="1" height="1"/><rect x="629" y="327" width="1" height="1"/><rect x="629" y="331" width="1" height="1"/><rect x="631" y="329" width="1" height="1"/><rect x="633" y="327" width="1" height="1"/><rect x="633" y="331" width="1" height="1"/><rect x="635" y="329" width="1" height="1"/><rect x="637" y="327" width="1" height="1"/><rect x="637" y="331" width="1" height="1"/><rect x="639" y="329" width="1" height="1"/><rect x="641" y="327" width="1" height="1"/><rect x="641" y="331" width="1" height="1"/><rect x="643" y="329" width="1" height="1"/><rect x="645" y="327" width="1" height="1"/><rect x="645" y="331" width="1" height="1"/><rect x="647" y="329" width="1" height="1"/><rect x="649" y="327" width="1" height="1"/><rect x="649" y="331" width="1" height="1"/><rect x="651" y="329" width="1" height="1"/><rect x="653" y="327" width="1" height="1"/><rect x="653" y="331" width="1" height="1"/><rect x="655" y="329" width="1" height="1"/><rect x="657" y="327" width="1" height="1"/><rect x="657" y="331" width="1" height="1"/><rect x="659" y="329" width="1" height="1"/><rect x="661" y="327" width="1" height="1"/><rect x="661" y="331" width="1" height="1"/><rect x="663" y="329" width="1" height="1"/><rect x="665" y="327" width="1" height="1"/><rect x="665" y="331" width="1" height="1"/><rect x="667" y="329" width="1" height="1"/><rect x="669" y="327" width="1" height="1"/><rect x="669" y="331" width="1" height="1"/><rect x="671" y="329" width="1" height="1"/><rect x="673" y="327" width="1" height="1"/><rect x="673" y="331" width="1" height="1"/><rect x="675" y="329" width="1" height="1"/><rect x="677" y="327" width="1" height="1"/><rect x="677" y="331" width="1" height="1"/><rect x="679" y="329" width="1" height="1"/><rect x="681" y="327" width="1" height="1"/><rect x="681" y="331" width="1" height="1"/><rect x="683" y="329" width="1" height="1"/><rect x="685" y="327" width="1" height="1"/><rect x="685" y="331" width="1" height="1"/><rect x="687" y="329" width="1" height="1"/><rect x="689" y="327" width="1" height="1"/><rect x="689" y="331" width="1" height="1"/><rect x="691" y="329" width="1" height="1"/><rect x="693" y="327" width="1" height="1"/><rect x="693" y="331" width="1" height="1"/><rect x="695" y="329" width="1" height="1"/><rect x="697" y="327" width="1" height="1"/><rect x="697" y="331" width="1" height="1"/><rect x="699" y="329" width="1" height="1"/><rect x="701" y="327" width="1" height="1"/><rect x="701" y="331" width="1" height="1"/><rect x="703" y="329" width="1" height="1"/><rect x="705" y="327" width="1" height="1"/><rect x="705" y="331" width="1" height="1"/><rect x="707" y="329" width="1" height="1"/><rect x="709" y="327" width="1" height="1"/><rect x="709" y="331" width="1" height="1"/><rect x="711" y="329" width="1" height="1"/><rect x="713" y="327" width="1" height="1"/><rect x="713" y="331" width="1" height="1"/><rect x="715" y="329" width="1" height="1"/><rect x="717" y="327" width="1" height="1"/><rect x="717" y="331" width="1" height="1"/><rect x="719" y="329" width="1" height="1"/><rect x="721" y="327" width="1" height="1"/><rect x="721" y="331" width="1" height="1"/><rect x="723" y="329" width="1" height="1"/><rect x="725" y="327" width="1" height="1"/><rect x="725" y="331" width="1" height="1"/><rect x="727" y="329" width="1" height="1"/><rect x="729" y="327" width="1" height="1"/><rect x="729" y="331" width="1" height="1"/><rect x="731" y="329" width="1" height="1"/><rect x="733" y="327" width="1" height="1"/><rect x="733" y="331" width="1" height="1"/><rect x="735" y="329" width="1" height="1"/><rect x="737" y="327" width="1" height="1"/><rect x="737" y="331" width="1" height="1"/><rect x="739" y="329" width="1" height="1"/><rect x="741" y="327" width="1" height="1"/><rect x="741" y="331" width="1" height="1"/><rect x="743" y="329" width="1" height="1"/><rect x="745" y="327" width="1" height="1"/><rect x="745" y="331" width="1" height="1"/><rect x="747" y="329" width="1" height="1"/><rect x="749" y="327" width="1" height="1"/><rect x="749" y="331" width="1" height="1"/><rect x="751" y="329" width="1" height="1"/><rect x="753" y="327" width="1" height="1"/><rect x="753" y="331" width="1" height="1"/><rect x="755" y="329" width="1" height="1"/><rect x="757" y="327" width="1" height="1"/><rect x="757" y="331" width="1" height="1"/><rect x="759" y="329" width="1" height="1"/><rect x="761" y="327" width="1" height="1"/><rect x="761" y="331" width="1" height="1"/><rect x="763" y="329" width="1" height="1"/><rect x="765" y="327" width="1" height="1"/><rect x="765" y="331" width="1" height="1"/><rect x="767" y="329" width="1" height="1"/><rect x="769" y="327" width="1" height="1"/><rect x="769" y="331" width="1" height="1"/><rect x="771" y="329" width="1" height="1"/><rect x="773" y="327" width="1" height="1"/><rect x="773" y="331" width="1" height="1"/><rect x="775" y="329" width="1" height="1"/><rect x="777" y="327" width="1" height="1"/><rect x="777" y="331" width="1" height="1"/><rect x="779" y="329" width="1" height="1"/><rect x="781" y="327" width="1" height="1"/><rect x="781" y="331" width="1" height="1"/><rect x="783" y="329" width="1" height="1"/><rect x="785" y="327" width="1" height="1"/><rect x="785" y="331" width="1" height="1"/><rect x="787" y="329" width="1" height="1"/><rect x="789" y="327" width="1" height="1"/><rect x="789" y="331" width="1" height="1"/><rect x="791" y="329" width="1" height="1"/><rect x="793" y="327" width="1" height="1"/><rect x="793" y="331" width="1" height="1"/><rect x="795" y="329" width="1" height="1"/><rect x="797" y="327" width="1" height="1"/><rect x="797" y="331" width="1" height="1"/><rect x="799" y="329" width="1" height="1"/><rect x="801" y="327" width="1" height="1"/><rect x="801" y="331" width="1" height="1"/><rect x="803" y="329" width="1" height="1"/><rect x="805" y="327" width="1" height="1"/><rect x="805" y="331" width="1" height="1"/><rect x="807" y="329" width="1" height="1"/><rect x="809" y="327" width="1" height="1"/><rect x="809" y="331" width="1" height="1"/><rect x="811" y="329" width="1" height="1"/><rect x="813" y="327" width="1" height="1"/><rect x="813" y="331" width="1" height="1"/><rect x="815" y="329" width="1" height="1"/><rect x="817" y="327" width="1" height="1"/><rect x="817" y="331" width="1" height="1"/><rect x="819" y="329" width="1" height="1"/><rect x="821" y="327" width="1" height="1"/><rect x="821" y="331" width="1" height="1"/><rect x="823" y="329" width="1" height="1"/><rect x="825" y="327" width="1" height="1"/><rect x="825" y="331" width="1" height="1"/><rect x="827" y="329" width="1" height="1"/><rect x="829" y="327" width="1" height="1"/><rect x="829" y="331" width="1" height="1"/><rect x="831" y="329" width="1" height="1"/><rect x="833" y="327" width="1" height="1"/><rect x="833" y="331" width="1" height="1"/><rect x="835" y="329" width="1" height="1"/><rect x="837" y="327" width="1" height="1"/><rect x="837" y="331" width="1" height="1"/><rect x="839" y="329" width="1" height="1"/><rect x="841" y="327" width="1" height="1"/><rect x="841" y="331" width="1" height="1"/><rect x="843" y="329" width="1" height="1"/><rect x="845" y="327" width="1" height="1"/><rect x="845" y="331" width="1" height="1"/><rect x="847" y="329" width="1" height="1"/><rect x="849" y="327" width="1" height="1"/><rect x="849" y="331" width="1" height="1"/><rect x="851" y="329" width="1" height="1"/><rect x="853" y="327" width="1" height="1"/><rect x="853" y="331" width="1" height="1"/><rect x="855" y="329" width="1" height="1"/><rect x="857" y="327" width="1" height="1"/><rect x="857" y="331" width="1" height="1"/><rect x="859" y="329" width="1" height="1"/><rect x="861" y="327" width="1" height="1"/><rect x="861" y="331" width="1" height="1"/><rect x="863" y="329" width="1" height="1"/><rect x="865" y="327" width="1" height="1"/><rect x="865" y="331" width="1" height="1"/><rect x="867" y="329" width="1" height="1"/><rect x="869" y="327" width="1" height="1"/><rect x="869" y="331" width="1" height="1"/><rect x="871" y="329" width="1" height="1"/><rect x="873" y="327" width="1" height="1"/><rect x="873" y="331" width="1" height="1"/><rect x="875" y="329" width="1" height="1"/><rect x="877" y="327" width="1" height="1"/><rect x="877" y="331" width="1" height="1"/><rect x="879" y="329" width="1" height="1"/><rect x="881" y="327" width="1" height="1"/><rect x="881" y="331" width="1" height="1"/><rect x="883" y="329" width="1" height="1"/><rect x="885" y="327" width="1" height="1"/><rect x="885" y="331" width="1" height="1"/><rect x="887" y="329" width="1" height="1"/><rect x="889" y="327" width="1" height="1"/><rect x="889" y="331" width="1" height="1"/><rect x="891" y="329" width="1" height="1"/><rect x="893" y="327" width="1" height="1"/><rect x="893" y="331" width="1" height="1"/><rect x="895" y="329" width="1" height="1"/><rect x="897" y="327" width="1" height="1"/><rect x="897" y="331" width="1" height="1"/><rect x="899" y="329" width="1" height="1"/><rect x="901" y="327" width="1" height="1"/><rect x="901" y="331" width="1" height="1"/><rect x="903" y="329" width="1" height="1"/><rect x="905" y="327" width="1" height="1"/><rect x="905" y="331" width="1" height="1"/><rect x="907" y="329" width="1" height="1"/><rect x="909" y="327" width="1" height="1"/><rect x="909" y="331" width="1" height="1"/><rect x="911" y="329" width="1" height="1"/><rect x="913" y="327" width="1" height="1"/><rect x="913" y="331" width="1" height="1"/><rect x="915" y="329" width="1" height="1"/><rect x="917" y="327" width="1" height="1"/><rect x="917" y="331" width="1" height="1"/><rect x="919" y="329" width="1" height="1"/><rect x="921" y="327" width="1" height="1"/><rect x="921" y="331" width="1" height="1"/><rect x="923" y="329" width="1" height="1"/><rect x="925" y="327" width="1" height="1"/><rect x="925" y="331" width="1" height="1"/><rect x="927" y="329" width="1" height="1"/><rect x="929" y="327" width="1" height="1"/><rect x="929" y="331" width="1" height="1"/><rect x="931" y="329" width="1" height="1"/><rect x="933" y="327" width="1" height="1"/><rect x="933" y="331" width="1" height="1"/><rect x="935" y="329" width="1" height="1"/><rect x="937" y="327" width="1" height="1"/><rect x="937" y="331" width="1" height="1"/><rect x="939" y="329" width="1" height="1"/><rect x="941" y="327" width="1" height="1"/><rect x="941" y="331" width="1" height="1"/><rect x="943" y="329" width="1" height="1"/><rect x="945" y="327" width="1" height="1"/><rect x="945" y="331" width="1" height="1"/><rect x="947" y="329" width="1" height="1"/><rect x="949" y="327" width="1" height="1"/><rect x="949" y="331" width="1" height="1"/><rect x="951" y="329" width="1" height="1"/><rect x="953" y="327" width="1" height="1"/><rect x="953" y="331" width="1" height="1"/><rect x="955" y="329" width="1" height="1"/><rect x="957" y="327" width="1" height="1"/><rect x="957" y="331" width="1" height="1"/><rect x="959" y="329" width="1" height="1"/><rect x="961" y="327" width="1" height="1"/><rect x="961" y="331" width="1" height="1"/><rect x="963" y="329" width="1" height="1"/><rect x="965" y="327" width="1" height="1"/><rect x="965" y="331" width="1" height="1"/><rect x="967" y="329" width="1" height="1"/><rect x="969" y="327" width="1" height="1"/><rect x="969" y="331" width="1" height="1"/><rect x="971" y="329" width="1" height="1"/><rect x="973" y="327" width="1" height="1"/><rect x="973" y="331" width="1" height="1"/><rect x="975" y="329" width="1" height="1"/><rect x="977" y="327" width="1" height="1"/><rect x="977" y="331" width="1" height="1"/><rect x="979" y="329" width="1" height="1"/><rect x="981" y="327" width="1" height="1"/><rect x="981" y="331" width="1" height="1"/><rect x="983" y="329" width="1" height="1"/><rect x="985" y="327" width="1" height="1"/><rect x="985" y="331" width="1" height="1"/><rect x="987" y="329" width="1" height="1"/><rect x="989" y="327" width="1" height="1"/><rect x="989" y="331" width="1" height="1"/><rect x="991" y="329" width="1" height="1"/><rect x="993" y="327" width="1" height="1"/><rect x="993" y="331" width="1" height="1"/><rect x="995" y="329" width="1" height="1"/><rect x="997" y="327" width="1" height="1"/><rect x="997" y="331" width="1" height="1"/><rect x="999" y="329" width="1" height="1"/><rect x="1001" y="327" width="1" height="1"/><rect x="1001" y="331" width="1" height="1"/><rect x="1003" y="329" width="1" height="1"/><rect x="1005" y="327" width="1" height="1"/><rect x="1005" y="331" width="1" height="1"/><rect x="1007" y="329" width="1" height="1"/><rect x="1009" y="327" width="1" height="1"/><rect x="1009" y="331" width="1" height="1"/><rect x="1011" y="329" width="1" height="1"/><rect x="1013" y="327" width="1" height="1"/><rect x="1013" y="331" width="1" height="1"/><rect x="1015" y="329" width="1" height="1"/><rect x="1017" y="327" width="1" height="1"/><rect x="1017" y="331" width="1" height="1"/><rect x="1019" y="329" width="1" height="1"/><rect x="1021" y="327" width="1" height="1"/><rect x="1021" y="331" width="1" height="1"/><rect x="1023" y="329" width="1" height="1"/><rect x="1025" y="327" width="1" height="1"/><rect x="1025" y="331" width="1" height="1"/><rect x="1027" y="329" width="1" height="1"/><rect x="1029" y="327" width="1" height="1"/><rect x="1029" y="331" width="1" height="1"/><rect x="1031" y="329" width="1" height="1"/><rect x="1033" y="327" width="1" height="1"/><rect x="1033" y="331" width="1" height="1"/><rect x="1035" y="329" width="1" height="1"/><rect x="1037" y="327" width="1" height="1"/><rect x="1037" y="331" width="1" height="1"/><rect x="1039" y="329" width="1" height="1"/><rect x="1041" y="327" width="1" height="1"/><rect x="1041" y="331" width="1" height="1"/><rect x="1043" y="329" width="1" height="1"/><rect x="1045" y="327" width="1" height="1"/><rect x="1045" y="331" width="1" height="1"/><rect x="1047" y="329" width="1" height="1"/><rect x="1049" y="327" width="1" height="1"/><rect x="1049" y="331" width="1" height="1"/><rect x="1051" y="329" width="1" height="1"/><rect x="1053" y="327" width="1" height="1"/><rect x="1053" y="331" width="1" height="1"/><rect x="1055" y="329" width="1" height="1"/><rect x="1057" y="327" width="1" height="1"/><rect x="1057" y="331" width="1" height="1"/><rect x="1059" y="329" width="1" height="1"/><rect x="1061" y="327" width="1" height="1"/><rect x="1061" y="331" width="1" height="1"/><rect x="1063" y="329" width="1" height="1"/><rect x="1065" y="327" width="1" height="1"/><rect x="1065" y="331" width="1" height="1"/><rect x="1067" y="329" width="1" height="1"/><rect x="1069" y="327" width="1" height="1"/><rect x="1069" y="331" width="1" height="1"/><rect x="1071" y="329" width="1" height="1"/><rect x="1073" y="327" width="1" height="1"/><rect x="1073" y="331" width="1" height="1"/><rect x="1075" y="329" width="1" height="1"/><rect x="1077" y="327" width="1" height="1"/><rect x="1077" y="331" width="1" height="1"/><rect x="1079" y="329" width="1" height="1"/><rect x="1081" y="327" width="1" height="1"/><rect x="1081" y="331" width="1" height="1"/><rect x="1083" y="329" width="1" height="1"/><rect x="1085" y="327" width="1" height="1"/><rect x="1085" y="331" width="1" height="1"/><rect x="1087" y="329" width="1" height="1"/><rect x="1089" y="327" width="1" height="1"/><rect x="1089" y="331" width="1" height="1"/><rect x="1091" y="329" width="1" height="1"/><rect x="1093" y="327" width="1" height="1"/><rect x="1093" y="331" width="1" height="1"/><rect x="1095" y="329" width="1" height="1"/><rect x="1097" y="327" width="1" height="1"/><rect x="1097" y="331" width="1" height="1"/><rect x="1099" y="329" width="1" height="1"/><rect x="1101" y="327" width="1" height="1"/><rect x="1101" y="331" width="1" height="1"/><rect x="1103" y="329" width="1" height="1"/><rect x="1105" y="327" width="1" height="1"/><rect x="1105" y="331" width="1" height="1"/><rect x="1107" y="329" width="1" height="1"/><rect x="1109" y="327" width="1" height="1"/><rect x="1109" y="331" width="1" height="1"/><rect x="1111" y="329" width="1" height="1"/><rect x="1113" y="327" width="1" height="1"/><rect x="1113" y="331" width="1" height="1"/><rect x="1115" y="329" width="1" height="1"/><rect x="1117" y="327" width="1" height="1"/><rect x="1117" y="331" width="1" height="1"/><rect x="1119" y="329" width="1" height="1"/><rect x="1121" y="327" width="1" height="1"/><rect x="1121" y="331" width="1" height="1"/><rect x="1123" y="329" width="1" height="1"/><rect x="1125" y="327" width="1" height="1"/><rect x="1125" y="331" width="1" height="1"/><rect x="1127" y="329" width="1" height="1"/><rect x="1129" y="327" width="1" height="1"/><rect x="1129" y="331" width="1" height="1"/><rect x="1131" y="329" width="1" height="1"/><rect x="1133" y="327" width="1" height="1"/><rect x="1133" y="331" width="1" height="1"/><rect x="1135" y="329" width="1" height="1"/><rect x="1137" y="327" width="1" height="1"/><rect x="1137" y="331" width="1" height="1"/><rect x="1139" y="329" width="1" height="1"/><rect x="1141" y="327" width="1" height="1"/><rect x="1141" y="331" width="1" height="1"/><rect x="1143" y="329" width="1" height="1"/><rect x="1145" y="327" width="1" height="1"/><rect x="1145" y="331" width="1" height="1"/><rect x="1147" y="329" width="1" height="1"/><rect x="1149" y="327" width="1" height="1"/><rect x="1149" y="331" width="1" height="1"/><rect x="1151" y="329" width="1" height="1"/></g></svg>
<svg class="a" style="left:1159px;top:327px" width="9" height="5" viewBox="0 0 9 5"><path d="M0 0H8L4 4Z" fill="#fff"/></svg>
<svg class="a" style="left:41px;top:348px" width="12" height="11" viewBox="0 0 12 11"><path d="M0.8 0.8 H11.2 L7.2 5.3 V9.6 H4.8 V5.3 Z" fill="#333"/></svg>
<svg class="a" style="left:61px;top:353px" width="6" height="3" viewBox="0 0 6 3"><path d="M0 0H6L3.0 3Z" fill="#717171"/></svg>
<div class="a" style="left:73px;top:344px;width:1px;height:20px;background:#cccedb;"></div>
<div class="a" style="left:78px;top:342px;width:65px;height:24px;border:1px solid #3399ff"></div>
<svg class="a" style="left:82px;top:347px" width="15" height="15" viewBox="0 0 15 15"><circle cx="7.1" cy="7.1" r="7.1" fill="#e51400"/><path d="M4.1 4.1 L10.1 10.1 M10.1 4.1 L4.1 10.1" stroke="#fff" stroke-width="2.2" stroke-linecap="round"/></svg>
<div class="a" style="left:100px;top:348px;color:#1e1e1e;transform:scaleX(0.9583333333333334);">1 Error</div>
<div class="a" style="left:146px;top:344px;width:1px;height:20px;background:#cccedb;"></div>
<svg class="a" style="left:155px;top:346px" width="15" height="15" viewBox="0 0 15 15"><path d="M7 0.8 L14 14.5 H0 Z" fill="#dcdcdc"/><rect x="6" y="5" width="2" height="5" fill="#b4b4b4"/><rect x="6" y="11" width="2" height="2" fill="#b4b4b4"/></svg>
<div class="a" style="left:173px;top:348px;color:#a2a4a5;">0 Warnings</div>
<div class="a" style="left:244px;top:344px;width:1px;height:20px;background:#cccedb;"></div>
<svg class="a" style="left:252px;top:346px" width="16" height="16" viewBox="0 0 16 16"><circle cx="7.9" cy="7.9" r="7.1" fill="#d2d2d2"/><rect x="6.8" y="3" width="2.2" height="2" fill="#fff"/><rect x="6.8" y="6.5" width="2.2" height="6.2" fill="#fff"/></svg>
<div class="a" style="left:272px;top:348px;color:#a2a4a5;transform:scaleX(0.9375);">0 Messages</div>
<div class="a" style="left:1007px;top:342px;width:163px;height:21px;background:#ffffff;"></div>
<div class="a" style="left:1012px;top:346px;color:#717171;transform:scaleX(0.9325842696629213);">Search Error List</div>
<div class="a" style="left:31px;top:368px;width:1139px;height:152px;background:#f5f5f5;"></div>
<div class="a" style="left:31px;top:391px;width:1139px;height:1px;background:#cccedb;"></div>
<div class="a" style="left:47px;top:368px;width:1px;height:23px;background:#cccedb;"></div>
<div class="a" style="left:65px;top:368px;width:1px;height:23px;background:#cccedb;"></div>
<div class="a" style="left:826px;top:368px;width:1px;height:23px;background:#cccedb;"></div>
<div class="a" style="left:946px;top:368px;width:1px;height:23px;background:#cccedb;"></div>
<div class="a" style="left:1016px;top:368px;width:1px;height:23px;background:#cccedb;"></div>
<div class="a" style="left:1086px;top:368px;width:1px;height:23px;background:#cccedb;"></div>
<div class="a" style="left:71px;top:373px;color:#1e1e1e;">Description</div>
<div class="a" style="left:832px;top:373px;color:#1e1e1e;">File</div>
<div class="a" style="left:952px;top:373px;color:#1e1e1e;">Line</div>
<div class="a" style="left:1022px;top:373px;color:#1e1e1e;">Colu...</div>
<div class="a" style="left:1092px;top:373px;color:#1e1e1e;">Project</div>
<svg class="a" style="left:860px;top:376px" width="11" height="6" viewBox="0 0 11 6"><path d="M0 5.5 L5 0.5 L10 5.5 Z" fill="#717171"/></svg>
<svg class="a" style="left:983px;top:376px" width="11" height="6" viewBox="0 0 11 6"><path d="M0 5.5 L5 0.5 L10 5.5 Z" fill="#717171"/></svg>
<svg class="a" style="left:1072px;top:376px" width="11" height="6" viewBox="0 0 11 6"><path d="M0 5.5 L5 0.5 L10 5.5 Z" fill="#717171"/></svg>
<svg class="a" style="left:1139px;top:376px" width="11" height="6" viewBox="0 0 11 6"><path d="M0 5.5 L5 0.5 L10 5.5 Z" fill="#717171"/></svg>
<svg class="a" style="left:32px;top:395px" width="15" height="15" viewBox="0 0 15 15"><circle cx="7.1" cy="7.1" r="7.1" fill="#e51400"/><path d="M4.1 4.1 L10.1 10.1 M10.1 4.1 L4.1 10.1" stroke="#fff" stroke-width="2.2" stroke-linecap="round"/></svg>
<div class="a" style="left:49px;top:395px;color:#1e1e1e;">1</div>
<div class="a" style="left:68px;top:395px;color:#1e1e1e;">Unsafe code may only appear if compiling with /unsafe</div>
<div class="a" style="left:829px;top:395px;color:#1e1e1e;transform:scaleX(0.9019607843137255);">Class1.cs</div>
<div class="a" style="left:948px;top:395px;color:#1e1e1e;">6</div>
<div class="a" style="left:1019px;top:395px;color:#1e1e1e;transform:scaleX(0.87);">24</div>
<div class="a" style="left:1089px;top:395px;color:#1e1e1e;">WindowsForms</div>
<div class="a" style="left:1089px;top:410px;color:#1e1e1e;">ation1</div>
<div class="a" style="left:87px;top:198px;width:376px;height:36px;border:5px solid #fd7e26"></div>
<div class="a" style="left:17px;top:381px;width:373px;height:40px;border:5px solid #fd7e26"></div>
</body></html>
